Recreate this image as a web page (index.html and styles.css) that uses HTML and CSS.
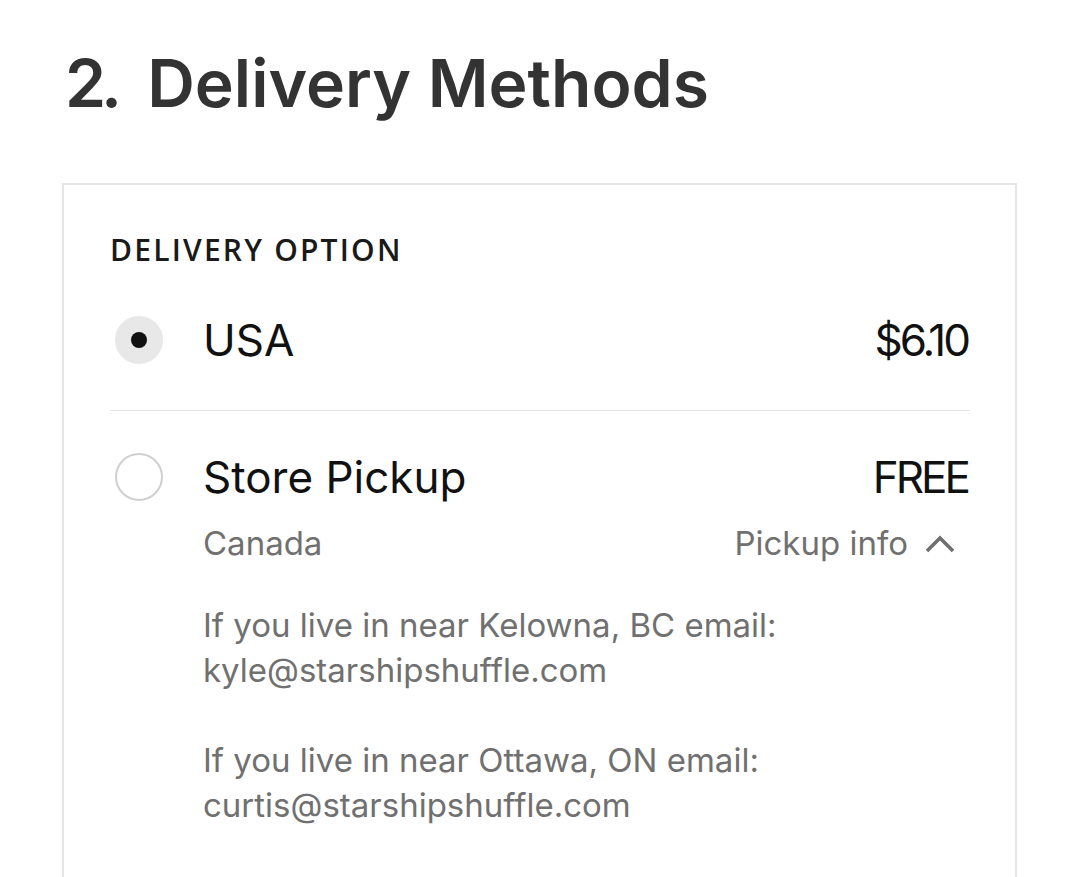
FILE: index.html
```html
<!DOCTYPE html>
<html lang="en">
<head>
<meta charset="utf-8">
<title>Delivery Methods</title>
<link rel="stylesheet" href="styles.css">
</head>
<body>
<main class="page">
  <h1 class="title"><span class="num">2.</span>Delivery Methods</h1>
  <section class="card">
    <h2 class="label">DELIVERY OPTION</h2>
    <div class="option option-first">
      <div class="row">
        <span class="radio radio-on"><span class="dot"></span></span>
        <span class="name">USA</span>
        <span class="price">$6.10</span>
      </div>
    </div>
    <div class="option option-second">
      <div class="row">
        <span class="radio"></span>
        <span class="name">Store Pickup</span>
        <span class="price">FREE</span>
      </div>
      <div class="sub">
        <span class="sub-left">Canada</span>
        <span class="sub-right">Pickup info
          <svg class="chev" width="32" height="22" viewBox="0 0 32 22"><polyline points="3,19 16,6 29,19" fill="none" stroke="#6f6f6f" stroke-width="3.6"/></svg>
        </span>
      </div>
      <div class="info">
        <p>If you live in near Kelowna, BC email:<br>kyle@starshipshuffle.com</p>
        <p>If you live in near Ottawa, ON email:<br>curtis@starshipshuffle.com</p>
      </div>
    </div>
  </section>
</main>
</body>
</html>
```

FILE: styles.css
```css
html, body {
  margin: 0;
  padding: 0;
  background: #ffffff;
}
.page {
  width: 1080px;
  height: 877px;
  overflow: hidden;
}
.title {
  margin: 0;
  padding: 48px 0 0 65px;
  font-family: "Inter", "Liberation Sans", sans-serif;
  font-weight: 600;
  font-size: 66px;
  line-height: 70px;
  color: #333333;
  letter-spacing: 0;
}
.num {
  letter-spacing: -5px;
  margin-right: 30px;
}
.card {
  margin: 65px 0 0 62px;
  width: 955px;
  height: 800px;
  box-sizing: border-box;
  border: 2px solid #e6e6e6;
  padding: 51px 45px 0 46px;
}
.label {
  margin: 0 0 6px 0;
  font-family: "Open Sans", sans-serif;
  font-weight: 600;
  font-size: 30px;
  line-height: 28px;
  letter-spacing: 2.2px;
  color: #1a1a1a;
}
.option-first {
  height: 140px;
  border-bottom: 1px solid #e2e2e2;
  display: flex;
  align-items: center;
}
.option-first .row {
  flex: 1;
}
.option-second {
  padding-top: 36px;
}
.row {
  display: flex;
  align-items: center;
  height: 60px;
}
.radio {
  width: 48px;
  height: 48px;
  border-radius: 50%;
  box-sizing: border-box;
  border: 2px solid #cfcfcf;
  margin: 0 40px 0 5px;
  display: flex;
  align-items: center;
  justify-content: center;
  flex: none;
}
.radio-on {
  background: #e8e8e8;
  border-color: #e8e8e8;
}
.dot {
  width: 16px;
  height: 16px;
  border-radius: 50%;
  background: #111111;
}
.name, .price {
  font-family: "Inter", sans-serif;
  font-size: 44px;
  color: #111111;
}
.name {
  flex: 1;
}
.price {
  letter-spacing: -3px;
  margin-right: 2px;
}
.sub {
  display: flex;
  justify-content: space-between;
  align-items: center;
  padding-left: 93px;
  margin-top: 14px;
  font-family: "Inter", sans-serif;
  font-size: 33px;
  line-height: 44px;
  color: #707070;
}
.sub-right {
  display: flex;
  align-items: center;
  gap: 16px;
  padding-right: 14px;
}
.info {
  padding-left: 93px;
  padding-top: 38px;
  font-family: "Inter", sans-serif;
  font-size: 33px;
  line-height: 45px;
  color: #707070;
}
.info p {
  margin: 0 0 45px 0;
}
```
